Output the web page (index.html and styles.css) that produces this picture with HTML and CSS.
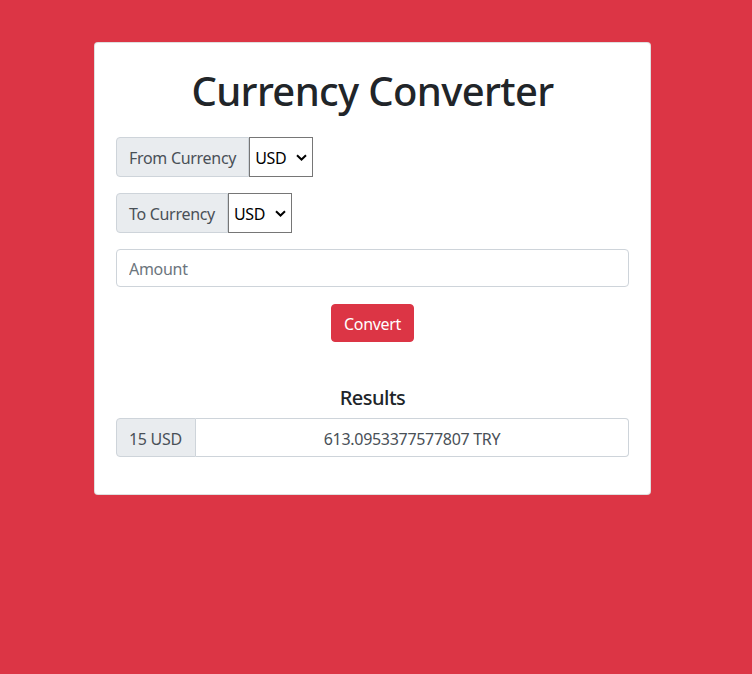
FILE: index.html
```html
<!DOCTYPE html>
<html lang="en">
<head>
<meta charset="utf-8">
<title>Currency Converter</title>
<link rel="stylesheet" href="styles.css">
</head>
<body>
<main class="card">
  <h1 class="title">Currency Converter</h1>
  <div class="group">
    <span class="addon">From Currency</span>
    <span class="select-wrap">
      <select class="select"><option>USD</option></select>
      <svg class="chev" width="11" height="7" viewBox="0 0 11 7"><path d="M1 1.2 L5.5 5.5 L10 1.2" fill="none" stroke="#000" stroke-width="2"/></svg>
    </span>
  </div>
  <div class="group">
    <span class="addon">To Currency</span>
    <span class="select-wrap">
      <select class="select"><option>USD</option></select>
      <svg class="chev" width="11" height="7" viewBox="0 0 11 7"><path d="M1 1.2 L5.5 5.5 L10 1.2" fill="none" stroke="#000" stroke-width="2"/></svg>
    </span>
  </div>
  <input class="amount" type="text" placeholder="Amount">
  <div class="actions">
    <button class="btn" type="button">Convert</button>
  </div>
  <h5 class="results-title">Results</h5>
  <div class="result-group">
    <span class="addon addon-result">15 USD</span>
    <span class="result-value">613.0953377577807 TRY</span>
  </div>
</main>
</body>
</html>
```

FILE: styles.css
```css
html, body {
  margin: 0;
  padding: 0;
}
body {
  background: #dc3545;
  font-family: "Noto Sans", "Open Sans", sans-serif;
  font-size: 16px;
  letter-spacing: -0.3px;
  color: #212529;
  min-height: 674px;
}
.card {
  box-sizing: border-box;
  width: 557px;
  margin: 42px 0 0 94px;
  background: #fff;
  border: 1px solid rgba(0,0,0,.125);
  border-radius: 4px;
  padding: 24px 21px 37px;
  display: flex;
  flex-direction: column;
}
.title {
  margin: 0 0 22px;
  font-size: 40px;
  font-weight: 500;
  line-height: 48px;
  letter-spacing: -0.65px;
  text-align: center;
  color: #212529;
}
.group {
  display: flex;
  align-items: stretch;
  height: 40px;
  margin-bottom: 16px;
}
.addon {
  box-sizing: border-box;
  display: flex;
  align-items: center;
  padding: 2px 12px 0;
  background: #e9ecef;
  border: 1px solid #ced4da;
  border-radius: 4px 0 0 4px;
  color: #495057;
  font-size: 16px;
  white-space: nowrap;
}
.select-wrap {
  position: relative;
  display: flex;
}
.select {
  appearance: none;
  -webkit-appearance: none;
  box-sizing: border-box;
  width: 64px;
  height: 100%;
  margin: 0;
  padding: 2px 20px 0 5px;
  border: 1px solid #767676;
  border-radius: 0;
  background: #fff;
  font-family: inherit;
  font-size: 16px;
  letter-spacing: -0.3px;
  color: #000;
}
.chev {
  position: absolute;
  right: 6px;
  top: 17px;
  pointer-events: none;
}
.amount {
  box-sizing: border-box;
  width: 100%;
  height: 38px;
  margin: 0;
  padding: 2px 12px 0;
  border: 1px solid #ced4da;
  border-radius: 4px;
  font-family: inherit;
  font-size: 16px;
  letter-spacing: -0.3px;
  color: #495057;
}
.amount::placeholder {
  color: #6c757d;
}
.actions {
  display: flex;
  justify-content: center;
  margin-top: 17px;
}
.btn {
  box-sizing: border-box;
  height: 38px;
  padding: 2px 12px 0;
  border: 1px solid #dc3545;
  border-radius: 4px;
  background: #dc3545;
  color: #fff;
  font-family: inherit;
  font-size: 16px;
  letter-spacing: -0.3px;
}
.results-title {
  margin: 44px 0 8px;
  font-size: 20px;
  font-weight: 500;
  line-height: 24px;
  letter-spacing: -0.5px;
  text-align: center;
}
.result-group {
  display: flex;
  height: 39px;
}
.addon-result {
  width: 80px;
}
.result-value {
  box-sizing: border-box;
  flex: 1;
  display: flex;
  align-items: center;
  justify-content: center;
  padding-top: 2px;
  border: 1px solid #ced4da;
  border-left: 0;
  border-radius: 0 4px 4px 0;
  color: #495057;
}
```
